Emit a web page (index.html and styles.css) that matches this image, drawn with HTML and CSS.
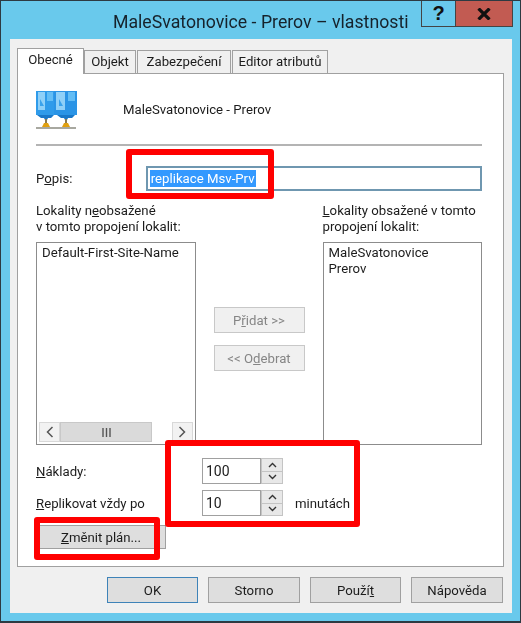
FILE: index.html
```html
<!DOCTYPE html>
<html lang="cs">
<head>
    <meta charset="UTF-8">
    <meta name="viewport" content="width=device-width, initial-scale=1.0">
    <title>MaleSvatonovice - Prerov – vlastnosti</title>
    <link rel="stylesheet" href="styles.css">
</head>
<body>
    <div class="window">
        <div class="titlebar">
            <div class="title">MaleSvatonovice - Prerov – vlastnosti</div>
            <div class="caption-btn help">?</div>
            <div class="caption-btn close">
                <svg width="14" height="12" viewBox="0 0 14 12"><path d="M1.5 0.5 L12.5 11.5 M12.5 0.5 L1.5 11.5" stroke="#111" stroke-width="3.2" fill="none"/></svg>
            </div>
        </div>

        <div class="client">
            <div class="tabs">
                <div class="tab active">Obecné</div>
                <div class="tab">Objekt</div>
                <div class="tab">Zabezpečení</div>
                <div class="tab">Editor atributů</div>
            </div>

            <div class="panel">
                <div class="head">
                    <svg class="site-icon" width="41" height="38" viewBox="0 0 41 38">
                        <rect x="0" y="0" width="20" height="24" fill="#2f9bea"/>
                        <rect x="18" y="0" width="23" height="24" fill="#2a94e6"/>
                        <path d="M2 1 H9 V19 H2 Z M20 1 H29 V19 H20 Z" fill="#8fd0f8"/>
                        <path d="M4 8 L8 15 H4 Z M23 8 L27 15 H23 Z" fill="#3aa2ec"/>
                        <path d="M11 1 H17 V10 H11 Z M32 1 H39 V10 H32 Z" fill="#63bdf5"/>
                        <path d="M1 24 H18 L15 27 H12 L11 29 H9 L8 27 H5 Z M21 24 H39 L36 27 H32 L31 29 H29 L28 27 H25 Z" fill="#1a78c8"/>
                        <rect x="9" y="28" width="2" height="4" fill="#8a7a50"/>
                        <rect x="29" y="28" width="2" height="4" fill="#8a7a50"/>
                        <path d="M6 36 L8 32 H12 L14 36 Z M26 36 L28 32 H32 L34 36 Z" fill="#e0a010"/>
                        <rect x="0" y="36" width="40" height="2" fill="#a8a8a0"/>
                    </svg>
                    <div class="head-name">MaleSvatonovice - Prerov</div>
                </div>
                <div class="sep"></div>

                <div class="desc-row">
                    <div class="desc-label">P<u>o</u>pis:</div>
                    <div class="desc-input"><span class="selected">replikace Msv-Prv</span></div>
                </div>

                <div class="columns">
                    <div class="col">
                        <div class="col-label">Lokality n<u>e</u>obsažené<br>v tomto propojení lokalit:</div>
                        <div class="listbox">
                            <div class="list-items">Default-First-Site-Name</div>
                            <div class="scrollbar">
                                <div class="sb-btn">
                                    <svg width="8" height="12" viewBox="0 0 8 12"><path d="M6.5 1 L1.5 6 L6.5 11" stroke="#555" stroke-width="1.5" fill="none"/></svg>
                                </div>
                                <div class="sb-thumb">
                                    <svg width="9" height="9" viewBox="0 0 9 9"><path d="M1 0 V9 M4.5 0 V9 M8 0 V9" stroke="#555" stroke-width="1.4"/></svg>
                                </div>
                                <div class="sb-track"></div>
                                <div class="sb-btn">
                                    <svg width="8" height="12" viewBox="0 0 8 12"><path d="M1.5 1 L6.5 6 L1.5 11" stroke="#555" stroke-width="1.5" fill="none"/></svg>
                                </div>
                            </div>
                        </div>
                    </div>

                    <div class="middle">
                        <div class="btn disabled">P<u>ř</u>idat &gt;&gt;</div>
                        <div class="btn disabled">&lt;&lt; O<u>d</u>ebrat</div>
                    </div>

                    <div class="col">
                        <div class="col-label"><u>L</u>okality obsažené v tomto<br>propojení lokalit:</div>
                        <div class="listbox">
                            <div class="list-items">MaleSvatonovice<br>Prerov</div>
                        </div>
                    </div>
                </div>

                <div class="field-row first">
                    <div class="field-label"><u>N</u>áklady:</div>
                    <div class="spin-input">100</div>
                    <div class="spinner">
                        <div class="spin-btn"><svg width="9" height="6" viewBox="0 0 9 6"><path d="M1 5 L4.5 1.5 L8 5" stroke="#333" stroke-width="1.4" fill="none"/></svg></div>
                        <div class="spin-btn"><svg width="9" height="6" viewBox="0 0 9 6"><path d="M1 1 L4.5 4.5 L8 1" stroke="#333" stroke-width="1.4" fill="none"/></svg></div>
                    </div>
                </div>
                <div class="field-row">
                    <div class="field-label"><u>R</u>eplikovat vždy po</div>
                    <div class="spin-input">10</div>
                    <div class="spinner">
                        <div class="spin-btn"><svg width="9" height="6" viewBox="0 0 9 6"><path d="M1 5 L4.5 1.5 L8 5" stroke="#333" stroke-width="1.4" fill="none"/></svg></div>
                        <div class="spin-btn"><svg width="9" height="6" viewBox="0 0 9 6"><path d="M1 1 L4.5 4.5 L8 1" stroke="#333" stroke-width="1.4" fill="none"/></svg></div>
                    </div>
                    <div class="unit">minutách</div>
                </div>

                <div class="btn plan"><u>Z</u>měnit plán...</div>
            </div>

            <div class="footer">
                <div class="btn default">OK</div>
                <div class="btn">Storno</div>
                <div class="btn">Použí<u>t</u></div>
                <div class="btn">Nápověda</div>
            </div>
        </div>

        <!-- cervene znacky pres dialog -->
        <div class="mark mark-desc"></div>
        <div class="mark mark-fields"></div>
        <div class="mark mark-plan"></div>
    </div>
</body>
</html>
```

FILE: styles.css
```css
* {
    box-sizing: border-box;
}

body {
    margin: 0;
    font-family: Roboto, "Open Sans", sans-serif;
    font-size: 13.2px;
    color: #1c1c1c;
    overflow: hidden;
}

.window {
    position: relative;
    width: 521px;
    height: 623px;
    background-color: #69c9ec;
    border: 1px solid #2d3a42;
    border-bottom-width: 2px;
}

.titlebar {
    display: flex;
    align-items: flex-start;
    height: 38px;
    padding-right: 7px;
}

.title {
    margin: 9px auto 0 112px;
    font-size: 17.7px;
    line-height: 24px;
    color: #16222b;
    filter: blur(0.3px);
}

.caption-btn {
    display: flex;
    align-items: center;
    justify-content: center;
    height: 26px;
    border: 1px solid #444;
    border-top: none;
}

.help {
    width: 35px;
    font-family: "Liberation Sans", sans-serif;
    font-size: 20px;
    font-weight: bold;
    color: #111;
}

.close {
    width: 58px;
    margin-left: -1px;
    background-color: #c25b52;
}

.client {
    width: 502px;
    height: 574px;
    margin-left: 9px;
    padding: 9px 7px 0;
    background-color: #f0f0f0;
    filter: blur(0.3px);
}

.tabs {
    display: flex;
    align-items: flex-end;
    height: 25px;
    position: relative;
    z-index: 1;
}

.tab {
    height: 23px;
    margin-right: 1px;
    line-height: 22px;
    text-align: center;
    white-space: nowrap;
    background-color: #f0f0f0;
    border: 1px solid #a0a0a0;
    border-bottom: none;
}

.tab:nth-child(2) { width: 52px; }
.tab:nth-child(3) { width: 94px; }
.tab:nth-child(4) { width: 96px; }

.tab.active {
    width: 67px;
    height: 26px;
    margin-bottom: -1px;
    margin-right: 0;
    background-color: #fff;
}

.panel {
    width: 487px;
    height: 494px;
    padding: 17px 21px 0 18px;
    background-color: #fff;
    border: 1px solid #a0a0a0;
}

.head {
    display: flex;
    align-items: center;
    height: 38px;
}

.head-name {
    margin-left: 46px;
    margin-top: -2px;
}

.sep {
    height: 2px;
    margin-top: 15px;
    background-color: #b4b4b4;
}

.desc-row {
    display: flex;
    align-items: center;
    margin-top: 20px;
}

.desc-label {
    width: 110px;
}

.desc-input {
    width: 337px;
    height: 25px;
    padding: 2px;
    background-color: #fff;
    border: 2px solid #6f97b0;
}

.selected {
    display: inline-block;
    height: 17px;
    padding: 0 1px;
    line-height: 17px;
    color: #fff;
    background-color: #3399ff;
}

.columns {
    display: flex;
    margin-top: 13px;
}

.col {
    width: 160px;
}

.col-label {
    height: 38px;
    margin-top: -1px;
    margin-bottom: 1px;
    line-height: 16px;
}

.listbox {
    display: flex;
    flex-direction: column;
    height: 203px;
    padding: 2px;
    background-color: #fff;
    border: 1px solid #8c8c8c;
}

.list-items {
    flex: 1;
    padding: 0 3px;
    line-height: 16px;
}

.scrollbar {
    display: flex;
    height: 20px;
}

.sb-btn {
    display: flex;
    align-items: center;
    justify-content: center;
    width: 21px;
    background-color: #f2f2f2;
    border: 1px solid #d8d8d8;
}

.sb-thumb {
    display: flex;
    align-items: center;
    justify-content: center;
    width: 92px;
    background-color: #dadada;
    border: 1px solid #c8c8c8;
}

.sb-track {
    flex: 1;
}

.middle {
    display: flex;
    flex-direction: column;
    gap: 12px;
    width: 127px;
    padding: 103px 18px 0;
}

.btn {
    display: flex;
    align-items: center;
    justify-content: center;
    width: 91px;
    height: 26px;
    background-color: #dedede;
    border: 1px solid #a0a0a0;
}

.btn.disabled {
    color: #858585;
    background-color: #f0f0f0;
    border-color: #c8c8c8;
}

.btn.default {
    border-color: #3e83b8;
}

.field-row {
    display: flex;
    align-items: center;
    height: 26px;
    margin-top: 6px;
}

.field-row.first {
    margin-top: 13px;
}

.field-label {
    width: 166px;
}

.spin-input {
    width: 59px;
    height: 26px;
    padding-left: 3px;
    font-size: 14px;
    line-height: 24px;
    border: 1px solid #a0a0a0;
}

.spinner {
    display: flex;
    flex-direction: column;
    gap: 1px;
    width: 22px;
    height: 26px;
    background-color: #c4c4c4;
    padding: 1px;
}

.spin-btn {
    display: flex;
    flex: 1;
    align-items: center;
    justify-content: center;
    background-color: #e8e8e8;
}

.unit {
    margin-left: 12px;
}

.btn.plan {
    width: 130px;
    height: 24px;
    margin-top: 9px;
}

.footer {
    display: flex;
    justify-content: flex-end;
    gap: 10px;
    width: 487px;
    margin-top: 10px;
    padding-right: 1px;
}

.footer .btn:nth-child(2),
.footer .btn:nth-child(4) {
    width: 92px;
}

.mark {
    position: absolute;
    border: 6px solid #ff0000;
    border-radius: 3px;
}

.mark-desc {
    left: 125px;
    top: 148px;
    width: 148px;
    height: 50px;
}

.mark-fields {
    left: 164px;
    top: 439px;
    width: 195px;
    height: 87px;
}

.mark-plan {
    left: 33px;
    top: 516px;
    width: 126px;
    height: 43px;
}
```
